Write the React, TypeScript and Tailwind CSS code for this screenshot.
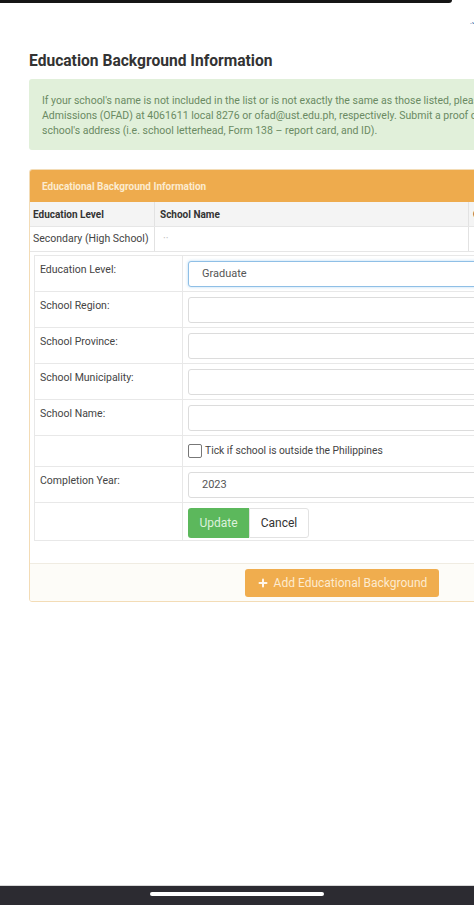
import { Plus } from "lucide-react";

const formRows = [
  { label: "School Region:", value: "" },
  { label: "School Province:", value: "" },
  { label: "School Municipality:", value: "" },
  { label: "School Name:", value: "" },
];

function Field({ value, focused }: { value: string; focused?: boolean }) {
  return (
    <div
      className={
        focused
          ? "flex h-[26px] items-center rounded-[3px] border border-[#8fbfe6] bg-white pl-[13px] text-[11px] text-[#555] shadow-[0_0_3px_rgba(102,175,233,0.5)]"
          : "flex h-[26px] items-center rounded-[3px] border border-[#dcdcdc] bg-white pl-[13px] text-[11px] text-[#555]"
      }
    >
      {value}
    </div>
  );
}

function FormRow({ label, children, className }: { label?: string; children: React.ReactNode; className?: string }) {
  return (
    <div className={`flex border-t border-[#e8e8e8] ${className ?? "h-[36px]"}`}>
      <div className="w-[148px] shrink-0 border-r border-[#e8e8e8] pl-[5px] pt-[6px] text-[10.5px] text-[#444]">
        {label}
      </div>
      <div className="flex-1 px-[5px] pt-[5px]">{children}</div>
    </div>
  );
}

export default function App() {
  return (
    <div
      className="relative flex h-[905px] w-[474px] flex-col overflow-hidden bg-white"
      style={{ fontFamily: "Roboto, 'Noto Sans', sans-serif" }}
    >
      <div className="h-[3px] w-[452px] rounded-br-[3px] bg-[#151515]" />
      <div className="flex h-[25px] items-end justify-end text-[9px] text-[#4a78b5]">
        <span className="translate-x-[3px]">.J</span>
      </div>

      <div className="pl-[29px]">
        <h1 className="mt-[23px] text-[15.6px] leading-[20px] font-bold text-[#333]">Education Background Information</h1>

        <div className="mt-[8px] w-[520px] rounded-l-[3px] bg-[#e1f0da] pb-[12px] pl-[13px] pt-[14px] text-[10.5px] leading-[15px] text-[#6a8a62]">
          <p className="whitespace-nowrap">
            If your school's name is not included in the list or is not exactly the same as those listed, please contact the Office of
          </p>
          <p className="whitespace-nowrap">
            Admissions (OFAD) at 4061611 local 8276 or ofad@ust.edu.ph, respectively. Submit a proof of your
          </p>
          <p className="whitespace-nowrap">school's address (i.e. school letterhead, Form 138 – report card, and ID).</p>
        </div>

        <div className="mt-[19px] w-[626px] overflow-hidden rounded-[3px] border border-[#f3dcb6] bg-white">
          <div className="flex h-[32px] items-center bg-[#eeab4d] pl-[12px] text-[10px] font-bold text-[#fcebd0]">
            Educational Background Information
          </div>

          <div className="flex h-[25px] items-center border-b border-[#e6e6e6] bg-[#f4f4f4] text-[10px] font-bold text-[#333]">
            <div className="flex h-full w-[125px] items-center border-r border-[#e2e2e2] pl-[3px]">Education Level</div>
            <div className="flex h-full w-[314px] items-center border-r border-[#e2e2e2] pl-[5px]">School Name</div>
            <div className="pl-[4px]">Graduated</div>
          </div>

          <div className="flex h-[25px] items-center border-b border-[#e6e6e6] text-[10.5px] text-[#444]">
            <div className="flex h-full w-[125px] items-center border-r border-[#e2e2e2] pl-[3px]">Secondary (High School)</div>
            <div className="flex h-full w-[314px] items-center border-r border-[#e2e2e2] pl-[8px] text-[#bbb]">··</div>
            <div className="pl-[4px]" />
          </div>

          <div className="pb-[22px] pl-[4px] pt-[3px]">
            <div className="border-b border-l border-[#e8e8e8]">
              <FormRow label="Education Level:">
                <Field value="Graduate" focused />
              </FormRow>
              {formRows.map((row) => (
                <FormRow key={row.label} label={row.label}>
                  <Field value={row.value} />
                </FormRow>
              ))}
              <FormRow className="h-[31px]">
                <label className="flex items-center gap-[3px] pt-[2px] text-[10.3px] text-[#444]">
                  <span className="h-[14px] w-[14px] rounded-[2px] border border-[#777] bg-white" />
                  Tick if school is outside the Philippines
                </label>
              </FormRow>
              <FormRow label="Completion Year:">
                <Field value="2023" />
              </FormRow>
              <FormRow className="h-[38px]">
                <div className="flex">
                  <button className="h-[30px] w-[61px] rounded-l-[3px] bg-[#5cb85c] text-[12px] text-[#dcf1dc]">Update</button>
                  <button className="h-[30px] w-[60px] rounded-r-[3px] border border-[#e2e2e2] bg-white text-[12px] text-[#333]">
                    Cancel
                  </button>
                </div>
              </FormRow>
            </div>
          </div>

          <div className="flex h-[38px] items-center border-t border-[#f0ece2] bg-[#fdfcf8] pl-[215px]">
            <button className="flex h-[28px] w-[194px] items-center justify-center gap-[5px] rounded-[3px] bg-[#f0ad4e] text-[12px] text-[#fdebd0]">
              <Plus size={12} strokeWidth={4} className="text-[#fff6ea]" />
              Add Educational Background
            </button>
          </div>
        </div>
      </div>

      <div className="flex-1" />
      <div className="h-[1px] bg-[#d8d8d8]" />
      <div className="flex h-[19px] justify-center bg-[#2c2b31] pt-[6px]">
        <div className="h-[4px] w-[174px] rounded-full bg-white" />
      </div>
    </div>
  );
}
